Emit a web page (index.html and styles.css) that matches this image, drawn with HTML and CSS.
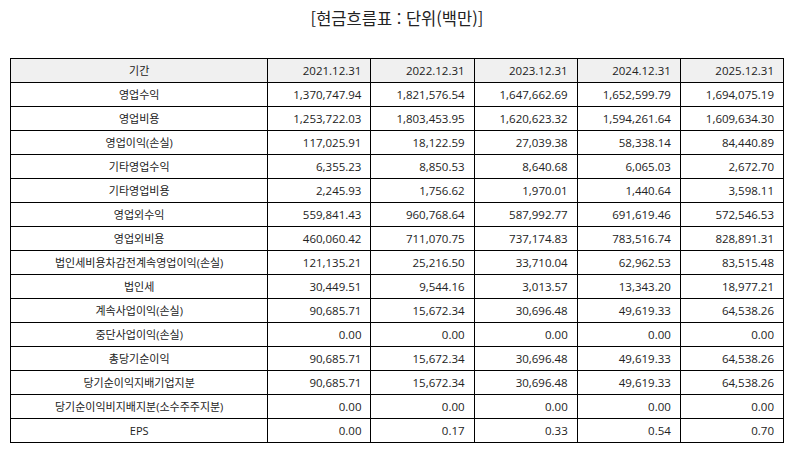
FILE: index.html
```html
<!DOCTYPE html>
<html lang="ko">
<head>
<meta charset="utf-8">
<link rel="stylesheet" href="styles.css">
</head>
<body>
<div class="wrap">
  <h1 class="title">[현금흐름표 : 단위(백만)]</h1>
  <table class="fin">
    <colgroup>
      <col class="c-label"><col class="c-num"><col class="c-num"><col class="c-num"><col class="c-num"><col class="c-num">
    </colgroup>
    <thead>
      <tr><th class="lbl">기간</th><th>2021.12.31</th><th>2022.12.31</th><th>2023.12.31</th><th>2024.12.31</th><th>2025.12.31</th></tr>
    </thead>
    <tbody>
      <tr><td class="lbl">영업수익</td><td>1,370,747.94</td><td>1,821,576.54</td><td>1,647,662.69</td><td>1,652,599.79</td><td>1,694,075.19</td></tr>
      <tr><td class="lbl">영업비용</td><td>1,253,722.03</td><td>1,803,453.95</td><td>1,620,623.32</td><td>1,594,261.64</td><td>1,609,634.30</td></tr>
      <tr><td class="lbl">영업이익(손실)</td><td>117,025.91</td><td>18,122.59</td><td>27,039.38</td><td>58,338.14</td><td>84,440.89</td></tr>
      <tr><td class="lbl">기타영업수익</td><td>6,355.23</td><td>8,850.53</td><td>8,640.68</td><td>6,065.03</td><td>2,672.70</td></tr>
      <tr><td class="lbl">기타영업비용</td><td>2,245.93</td><td>1,756.62</td><td>1,970.01</td><td>1,440.64</td><td>3,598.11</td></tr>
      <tr><td class="lbl">영업외수익</td><td>559,841.43</td><td>960,768.64</td><td>587,992.77</td><td>691,619.46</td><td>572,546.53</td></tr>
      <tr><td class="lbl">영업외비용</td><td>460,060.42</td><td>711,070.75</td><td>737,174.83</td><td>783,516.74</td><td>828,891.31</td></tr>
      <tr><td class="lbl">법인세비용차감전계속영업이익(손실)</td><td>121,135.21</td><td>25,216.50</td><td>33,710.04</td><td>62,962.53</td><td>83,515.48</td></tr>
      <tr><td class="lbl">법인세</td><td>30,449.51</td><td>9,544.16</td><td>3,013.57</td><td>13,343.20</td><td>18,977.21</td></tr>
      <tr><td class="lbl">계속사업이익(손실)</td><td>90,685.71</td><td>15,672.34</td><td>30,696.48</td><td>49,619.33</td><td>64,538.26</td></tr>
      <tr><td class="lbl">중단사업이익(손실)</td><td>0.00</td><td>0.00</td><td>0.00</td><td>0.00</td><td>0.00</td></tr>
      <tr><td class="lbl">총당기순이익</td><td>90,685.71</td><td>15,672.34</td><td>30,696.48</td><td>49,619.33</td><td>64,538.26</td></tr>
      <tr><td class="lbl">당기순이익지배기업지분</td><td>90,685.71</td><td>15,672.34</td><td>30,696.48</td><td>49,619.33</td><td>64,538.26</td></tr>
      <tr><td class="lbl">당기순이익비지배지분(소수주주지분)</td><td>0.00</td><td>0.00</td><td>0.00</td><td>0.00</td><td>0.00</td></tr>
      <tr><td class="lbl">EPS</td><td>0.00</td><td>0.17</td><td>0.33</td><td>0.54</td><td>0.70</td></tr>
    </tbody>
  </table>
</div>
</body>
</html>
```

FILE: styles.css
```css
html, body {
  margin: 0;
  padding: 0;
  background: #ffffff;
}
body {
  font-family: "Open Sans", "Noto Sans CJK KR", sans-serif;
  color: #222222;
}
.wrap {
  padding: 0 10px;
}
.title {
  margin: 0;
  padding-top: 7px;
  height: 58px;
  box-sizing: border-box;
  text-align: center;
  font-family: "Noto Sans CJK KR", sans-serif;
  font-size: 16.5px;
  font-weight: normal;
  line-height: 22px;
  color: #222222;
}
.fin {
  width: 774px;
  border-collapse: collapse;
  table-layout: fixed;
  font-size: 11.5px;
}
.c-label { width: 257px; }
.c-num { width: 103px; }
.fin th, .fin td {
  border: 1px solid #000000;
  height: 23px;
  padding: 0 9px;
  text-align: right;
  font-weight: normal;
  white-space: nowrap;
  box-sizing: content-box;
  line-height: 14px;
}
.fin th {
  background: #f0f0f0;
}
.fin .lbl {
  text-align: center;
  font-size: 11px;
}
```
